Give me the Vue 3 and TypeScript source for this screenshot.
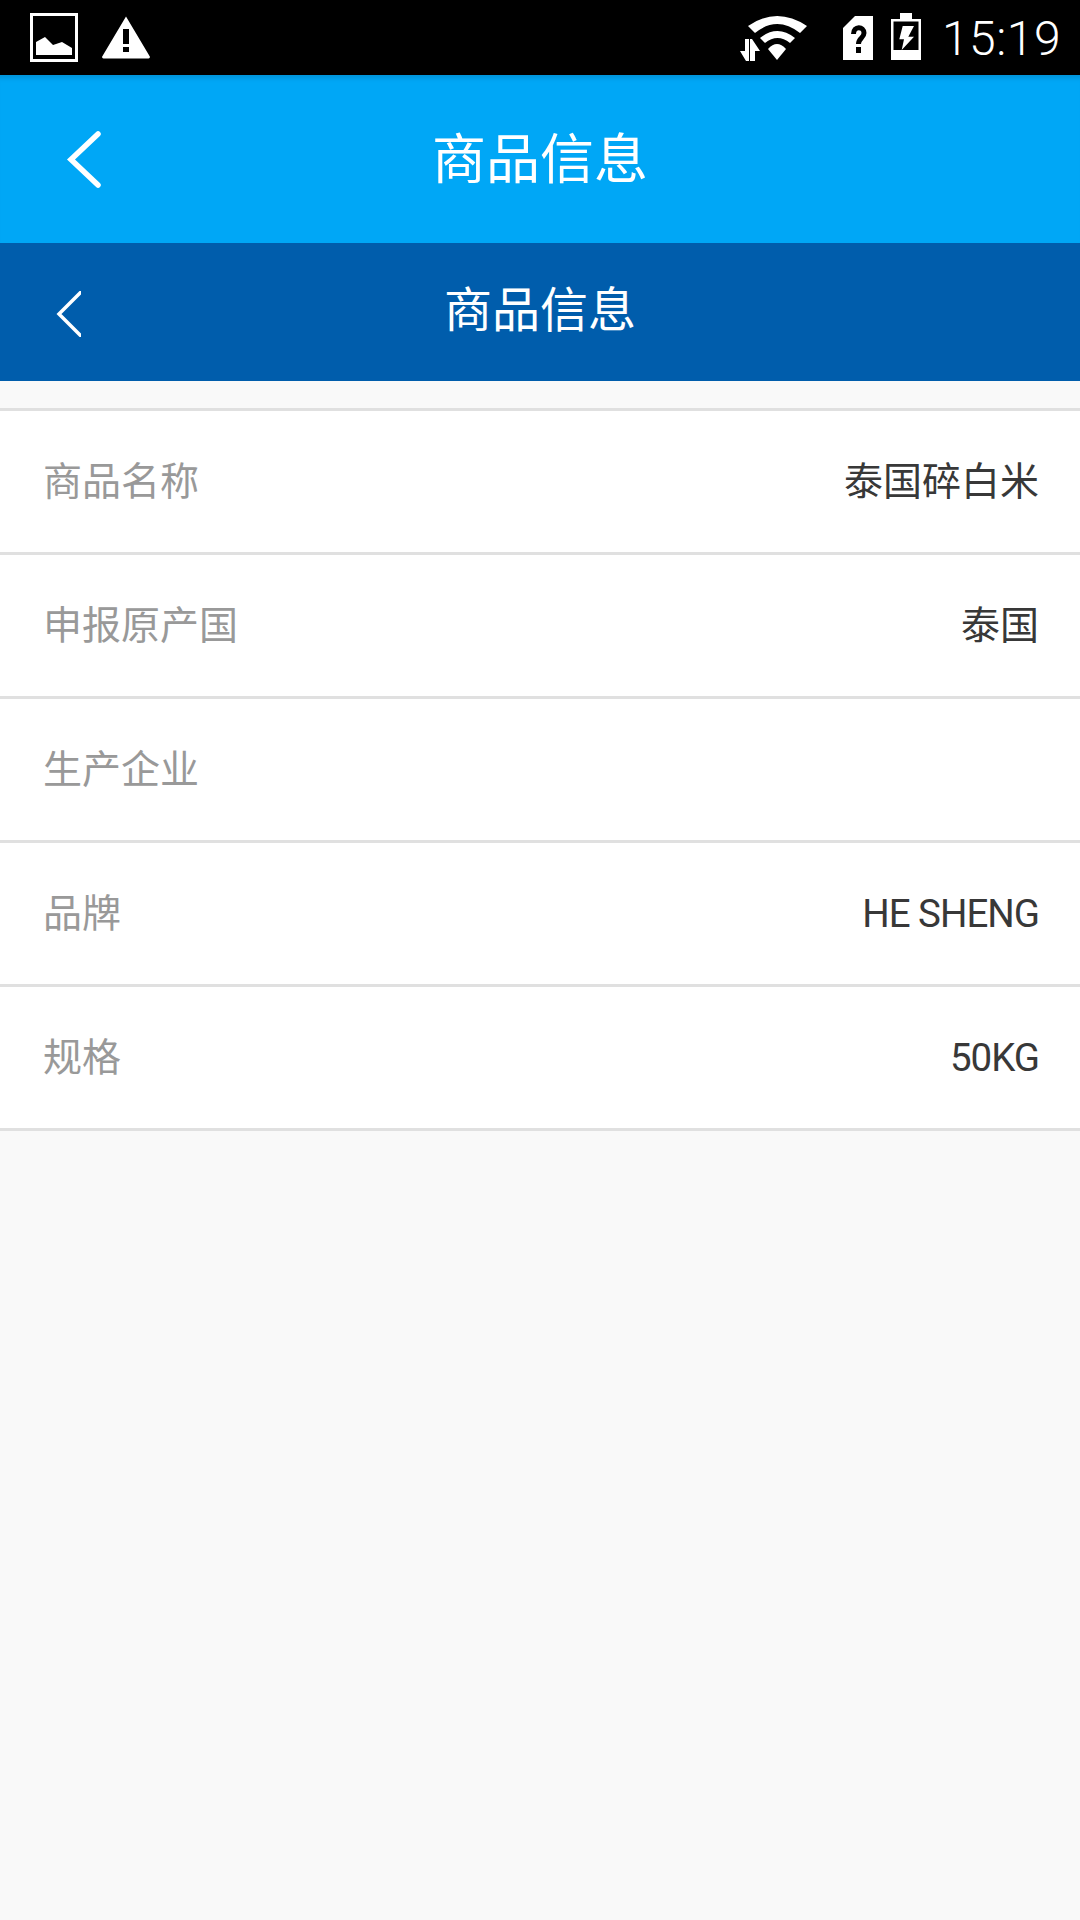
<template>
  <div class="screen">
    <div class="status-bar">
      <div class="status-left">
        <svg class="ic-picture" viewBox="0 0 48 49" width="48" height="49">
          <rect x="1.500" y="1.500" width="45" height="46" fill="none" stroke="#fff" stroke-width="3" />
          <path d="M6 42V29L15 24 23 32 32 29 42 35V42z" fill="#fff" />
        </svg>
        <svg class="ic-warning" viewBox="0 0 48 43" width="48" height="43">
          <path d="M24 0.500 47.500 40a1.500 1.500 0 0 1-1.300 2.500H1.800A1.500 1.500 0 0 1 0.500 40z" fill="#fff" />
          <rect x="21" y="13" width="6" height="15" fill="#000" />
          <rect x="21" y="31" width="6" height="5" fill="#000" />
        </svg>
      </div>
      <div class="status-right">
        <svg class="ic-wifi" viewBox="740 14 68 46" width="68" height="46">
          <path d="M748 25Q777 5 807 25L800 32Q777 14 755 32z" fill="#fff" />
          <path d="M760 37Q777.500 23 795 37L790 42Q777.500 32 765 42z" fill="#fff" />
          <path d="M768 48Q777 38 786 48L777 59z" fill="#fff" />
          <path d="M740 50H745V38H749V60H746z" fill="#fff" />
          <path d="M750 60V38H752L760 50H755V60z" fill="#fff" />
        </svg>
        <svg class="ic-sim" viewBox="0 0 30 44" width="30" height="44">
          <path d="M12 0H30V44H0V12z" fill="#fff" />
          <path d="M10.500 18C10.500 9.500 21 10 21 17C21 22 15.500 22 15.500 28" fill="none" stroke="#000" stroke-width="5" />
          <rect x="13" y="31" width="5" height="6" fill="#000" />
        </svg>
        <svg class="ic-battery" viewBox="0 0 30 47" width="30" height="47">
          <path d="M9 0H21V6H30V47H0V6H9z" fill="#fff" />
          <rect x="2.500" y="8.500" width="25" height="28.500" fill="#000" />
          <path d="M11.700 13H23L17.300 23.700H23L10.700 37 13 26.300H8.300z" fill="#fff" />
        </svg>
        <span class="clock">15:19</span>
      </div>
    </div>

    <header class="nav nav--outer">
      <svg class="chevron" viewBox="0 0 36 58" width="36" height="58">
        <path d="M32 3 5 28.500 32 54" fill="none" stroke="#fff" stroke-width="5.500" stroke-linecap="round" />
      </svg>
      <h1 class="nav-title">商品信息</h1>
    </header>

    <header class="nav nav--inner">
      <svg class="chevron" viewBox="0 0 25 46" width="25" height="46">
        <path d="M26 0 3 23 26 46" fill="none" stroke="#fff" stroke-width="3.500" />
      </svg>
      <h2 class="nav-title">商品信息</h2>
    </header>

    <main class="content">
      <ul class="info-list">
        <li v-for="row in rows" :key="row.label" class="info-row">
          <span class="label">{{ row.label }}</span>
          <span class="value" :class="{ 'value--latin': row.latin }">{{ row.value }}</span>
        </li>
      </ul>
    </main>
  </div>
</template>

<script setup lang="ts">
interface InfoRow {
  label: string
  value: string
  latin?: boolean
}

const rows: InfoRow[] = [
  { label: '商品名称', value: '泰国碎白米' },
  { label: '申报原产国', value: '泰国' },
  { label: '生产企业', value: '' },
  { label: '品牌', value: 'HE SHENG', latin: true },
  { label: '规格', value: '50KG', latin: true },
]
</script>

<style>
html,
body {
  margin: 0;
  background: #f9f9f9;
}
</style>

<style scoped>
.screen {
  width: 1080px;
  height: 1920px;
  display: flex;
  flex-direction: column;
  background: #f9f9f9;
  font-family: Roboto, 'Noto Sans CJK SC', sans-serif;
  overflow: hidden;
}
.status-bar {
  height: 75px;
  flex: none;
  display: flex;
  align-items: center;
  justify-content: space-between;
  background: #000;
  color: #fff;
  padding: 0 19px 0 30px;
  box-sizing: border-box;
}
.status-left,
.status-right {
  display: flex;
  align-items: center;
}
.ic-warning {
  margin-left: 24px;
}
.ic-sim {
  margin-left: 35px;
  margin-top: 1px;
}
.ic-battery {
  margin-left: 18px;
  margin-top: -2px;
}
.clock {
  margin-left: 21px;
  margin-top: 2px;
  font-size: 48px;
  font-weight: 300;
  letter-spacing: 0.500px;
  line-height: 1;
}
.nav {
  position: relative;
  flex: none;
  display: flex;
  align-items: center;
  justify-content: center;
  color: #fff;
}
.nav--outer {
  height: 168px;
  background: #00a7f6;
  box-shadow: inset 0 7px 5px -4px rgba(0, 0, 0, 0.12);
}
.nav--inner {
  height: 138px;
  background: #005dac;
}
.nav-title {
  margin: 0;
  font-weight: 400;
  line-height: 1;
}
.nav--outer .nav-title {
  font-size: 54px;
  margin-top: 4px;
}
.nav--inner .nav-title {
  font-size: 48px;
  margin-top: -2px;
}
.chevron {
  position: absolute;
}
.nav--outer .chevron {
  left: 66px;
  top: 56px;
}
.nav--inner .chevron {
  left: 56px;
  top: 48px;
}
.content {
  flex: 1;
  padding-top: 27px;
}
.info-list {
  margin: 0;
  padding: 0;
  list-style: none;
  background: #fff;
  border-top: 3px solid #e0e0e0;
}
.info-row {
  height: 141px;
  display: flex;
  align-items: center;
  justify-content: space-between;
  padding: 0 41px 0 43px;
  border-bottom: 3px solid #e0e0e0;
  font-size: 39px;
}
.label {
  color: #999;
  padding-bottom: 7px;
}
.value {
  color: #383838;
  padding-bottom: 7px;
}
.value--latin {
  padding-bottom: 0;
  font-size: 38.500px;
  letter-spacing: -1px;
}
</style>
